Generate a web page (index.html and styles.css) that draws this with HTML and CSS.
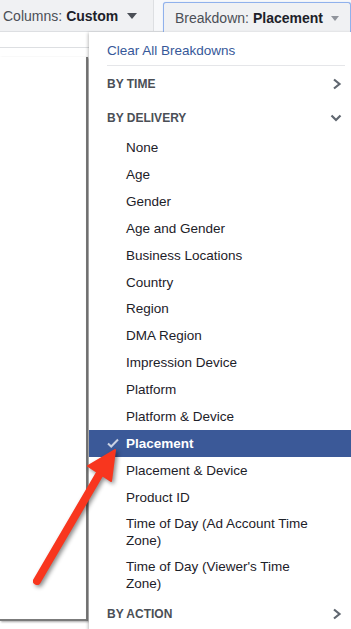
FILE: index.html
```html
<!DOCTYPE html>
<html lang="en">
<head>
  <meta charset="UTF-8" />
  <meta name="viewport" content="width=device-width, initial-scale=1.0"/>
  <title>Breakdown menu</title>
  <link rel="stylesheet" href="styles.css">
</head>
<body>
  <div class="toolbar">
    <div class="tool-btn columns">
      <span class="label">Columns:</span> <b>Custom</b>
      <span class="caret dark"></span>
    </div>
    <div class="tool-btn breakdown">
      <span class="label">Breakdown:</span> <b>Placement</b>
      <span class="caret"></span>
    </div>
  </div>

  <div class="subheader"></div>

  <div class="table-panel"></div>

  <div class="menu">
    <div class="clear">Clear All Breakdowns</div>

    <div class="group-head">
      <span>BY TIME</span>
      <svg width="10" height="12" viewBox="0 0 10 12"><polyline points="2,1.5 7.5,6 2,10.5" fill="none" stroke="#606770" stroke-width="2.2"/></svg>
    </div>

    <div class="group-head">
      <span>BY DELIVERY</span>
      <svg width="12" height="10" viewBox="0 0 12 10"><polyline points="1.5,2.5 6,7 10.5,2.5" fill="none" stroke="#606770" stroke-width="2.2"/></svg>
    </div>

    <ul class="items">
      <li><span class="check"></span>None</li>
      <li><span class="check"></span>Age</li>
      <li><span class="check"></span>Gender</li>
      <li><span class="check"></span>Age and Gender</li>
      <li><span class="check"></span>Business Locations</li>
      <li><span class="check"></span>Country</li>
      <li><span class="check"></span>Region</li>
      <li><span class="check"></span>DMA Region</li>
      <li><span class="check"></span>Impression Device</li>
      <li><span class="check"></span>Platform</li>
      <li><span class="check"></span>Platform &amp; Device</li>
      <li class="selected">
        <span class="check">
          <svg width="12" height="10" viewBox="0 0 12 10"><polyline points="1,5.5 4.2,8.5 11,1.5" fill="none" stroke="#c9d1e3" stroke-width="2"/></svg>
        </span>Placement
      </li>
      <li><span class="check"></span>Placement &amp; Device</li>
      <li><span class="check"></span>Product ID</li>
      <li class="tall"><span class="check"></span><span>Time of Day (Ad Account Time Zone)</span></li>
      <li class="tall"><span class="check"></span><span>Time of Day (Viewer's Time Zone)</span></li>
    </ul>

    <div class="group-head">
      <span>BY ACTION</span>
      <svg width="10" height="12" viewBox="0 0 10 12"><polyline points="2,1.5 7.5,6 2,10.5" fill="none" stroke="#606770" stroke-width="2.2"/></svg>
    </div>
  </div>

  <svg class="arrow" width="351" height="629" viewBox="0 0 351 629">
    <line x1="37" y1="581" x2="99" y2="475" stroke="#f8361e" stroke-width="8" stroke-linecap="round"/>
    <polygon points="115,450 88,466 111,481" fill="#f8361e" stroke="#f8361e" stroke-width="2" stroke-linejoin="round"/>
  </svg>
</body>
</html>
```

FILE: styles.css
```css
html, body {
  margin: 0;
  padding: 0;
  height: 100%;
  overflow: hidden;
}

body {
  position: relative;
  background: #ffffff;
  font-family: 'Liberation Sans', Arial, sans-serif;
  color: #1d2129;
}

.toolbar {
  display: flex;
  height: 31px;
  background: #f7f8fa;
  border-bottom: 1px solid #dddfe2;
}

.tool-btn {
  display: flex;
  align-items: center;
  font-size: 14px;
  white-space: nowrap;
  background: #f0f1f3;
}

.tool-btn .label {
  color: #4b4f56;
  margin-right: 4px;
}

.tool-btn b {
  color: #1d2129;
}

.columns {
  width: 150px;
  padding-left: 3px;
  border-right: 1px solid #dddfe2;
}

.breakdown {
  margin: 2px 0 -1px 9px;
  padding-left: 11px;
  flex: 1;
  border: 1px solid #90b1ec;
  border-bottom: none;
  border-radius: 3px 3px 0 0;
  box-shadow: 0 0 1px #b9cff5;
}

.caret {
  width: 0;
  height: 0;
  margin-left: 8px;
  margin-top: 1px;
  border-left: 4px solid transparent;
  border-right: 4px solid transparent;
  border-top: 5px solid #90949c;
}

.caret.dark {
  margin-left: 9px;
  border-left-width: 5px;
  border-right-width: 5px;
  border-top: 6px solid #4b4f56;
}

.subheader {
  height: 15px;
  border-bottom: 1px solid #dddfe2;
}

.table-panel {
  width: 86px;
  height: 562px;
  margin-top: 9px;
  background: #fff;
  border-right: 2px solid #7b7b7b;
  border-bottom: 2px solid #7b7b7b;
  box-shadow: 1px 1px 2px rgba(0, 0, 0, 0.35);
}

/* dropdown overlay */
.menu {
  position: absolute;
  top: 32px;
  left: 89px;
  width: 272px;
  padding-top: 5px;
  background: #fff;
  box-shadow: -1px 1px 3px rgba(0, 0, 0, 0.25);
  font-size: 13.5px;
}

.clear {
  height: 28px;
  line-height: 28px;
  margin: 0 16px 0 18px;
  color: #365899;
  border-bottom: 1px solid #e5e6e9;
}

.group-head {
  display: flex;
  justify-content: space-between;
  align-items: center;
  height: 34px;
  padding: 2px 19px 0 18px;
  box-sizing: border-box;
  font-size: 12px;
  font-weight: bold;
  color: #4b4f56;
}

.items {
  list-style: none;
  margin: 0;
  padding: 0;
}

.items li {
  display: flex;
  align-items: flex-start;
  padding: 5.1px 40px 4.8px 18px;
  line-height: 17px;
}

.items li.tall {
  padding-top: 4.5px;
  padding-bottom: 4.5px;
}

.check {
  flex: none;
  width: 19px;
  height: 17px;
  display: flex;
  align-items: center;
}

.items li.selected {
  background: #3b5998;
  color: #fff;
  font-weight: bold;
}

.arrow {
  position: absolute;
  top: 0;
  left: 0;
  pointer-events: none;
  filter: drop-shadow(2px 2px 2px rgba(0, 0, 0, 0.45));
}
```
